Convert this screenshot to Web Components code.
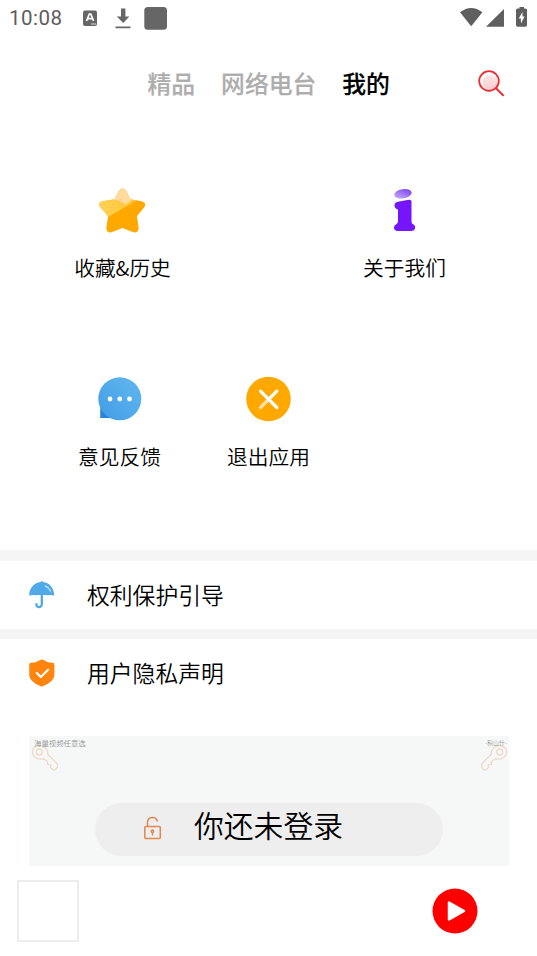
<!DOCTYPE html>
<html lang="zh-CN">
<head>
<meta charset="utf-8">
<title>我的</title>
<style>
html,body{margin:0;background:#fff}
body{width:537px;height:956px;overflow:hidden;font-family:"Noto Sans CJK SC",sans-serif;font-weight:350;color:#000}
</style>
</head>
<body>
<my-page></my-page>
<script>
const define = (name, markup) => {
  const t = document.createElement('template');
  t.innerHTML = markup;
  customElements.define(name, class extends HTMLElement {
    constructor() {
      super();
      this.attachShadow({ mode: 'open' }).append(t.content.cloneNode(true));
    }
  });
};

define('status-bar', `
<style>
:host{display:flex;align-items:center;height:37px;padding:0 9px 0 9px;box-sizing:border-box;color:#666}
span{font:400 20.5px/37px Roboto,sans-serif;width:73px;letter-spacing:.5px;color:#5c5c5c}
svg{display:block}
</style>
<span>10:08</span>
<svg width="90" height="37" viewBox="82 0 90 37">
<rect x="83" y="10.500" width="14" height="15.500" rx="2" fill="#666"/>
<path d="M86.500 21 89.300 14h1.500l2.800 7M87.800 18.700h4.500" fill="none" stroke="#fff" stroke-width="1.700"/><path d="M91 24h5" stroke="#ddd" stroke-width="1"/>
<path d="M121 8.500h4.400v8h4L123.200 23l-6.400-6.500h4.200zM115.500 26.400h15v1.800h-15z" fill="#666"/>
<rect x="144.300" y="7" width="22.700" height="22.700" rx="3.500" fill="#666"/>
</svg>
<svg style="margin-left:auto;flex:none" width="70" height="37" viewBox="458 0 70 37" fill="#5f5f5f">
<path d="M460 12.300Q471.200 3.700 482.400 12.300L471.200 26.300z"/>
<path d="M504 9v17.700h-18z"/>
<path d="M519.500 7h4.500v1.600h1.500q1.500 0 1.500 1.500v15q0 1.600-1.500 1.600h-8q-1.500 0-1.500-1.600v-15q0-1.500 1.500-1.500h2z"/>
<path d="M522.500 12 518.700 18.500h2.200v5l3.700-7h-2.100z" fill="#fff"/>
</svg>`);

define('nav-tab', `
<style>
:host{display:block;font-size:23.800px;line-height:36px;font-weight:500;color:#adadad;white-space:nowrap;-webkit-text-stroke:.15px}
:host([active]){color:#000}
</style><slot></slot>`);

define('tab-bar', `
<style>
:host{display:flex;align-items:center;height:92px;padding-left:147.500px;box-sizing:border-box;gap:26px}
svg{margin-left:auto;margin-right:31px;flex:none}
</style>
<slot></slot>
<svg width="30" height="30" viewBox="476 68 30 30">
<defs><linearGradient id="g" x1="0" y1="0" x2="0" y2="1"><stop offset="0" stop-color="#fde6e8"/><stop offset="1" stop-color="#fcccd0"/></linearGradient></defs>
<circle cx="490" cy="82.500" r="7.500" fill="url(#g)"/>
<circle cx="489" cy="81" r="9.800" fill="none" stroke="#ec2d32" stroke-width="1.800"/>
<path d="M496 88.300 503 95.300" stroke="#ec2d32" stroke-width="2" stroke-linecap="round"/>
</svg>`);

define('menu-tile', `
<style>
:host{display:flex;flex-direction:column;align-items:center;width:149px;font-size:20.700px;line-height:32px;white-space:nowrap}
::slotted(svg){display:block;width:50px;height:50px;margin-bottom:16px}
</style>
<slot name="icon"></slot><slot></slot>`);

define('list-row', `
<style>
:host{display:flex;align-items:center;height:68px;border-top:11px solid #f5f5f5;padding-left:25px;font-size:22.800px;line-height:36px}
::slotted(svg){display:block;width:32px;height:32px;margin-right:30px}
</style>
<slot name="icon"></slot><slot></slot>`);

define('login-banner', `
<style>
:host{display:grid;position:relative;margin:30px 28px 0 29px;height:130px;background:#f6f8f8;box-sizing:border-box;padding:66.500px 66px 10.500px}
.pill{display:flex;align-items:center;background:#eee;border-radius:27px;padding-left:46px;font-size:29.800px;line-height:44px}
.pill span{margin:-10px 0 0 30px}
.tiny{position:absolute;top:1px;font-size:7.400px;line-height:12px;color:#969898;white-space:nowrap}
.l{left:5px}.r{right:2px;font-size:6px}
.key{position:absolute;top:6px;fill:none;stroke:#efd9c8;stroke-width:1.300}
</style>
<svg class="key" style="left:1px" width="32" height="30" viewBox="30 742 32 30"><path d="M39.500 745.500c5 0 8.500 4 8.300 9l9.300 9c1 3-.5 6.500-3.600 6.700l-3-2.800.2-2.700-3-.4-.3-3-3.600-2.500c-6 1.600-11.300-2-11.300-6.800 0-3.800 3-6.500 7-6.500z"/><circle cx="39.300" cy="752" r="3"/></svg>
<svg class="key" style="right:0" width="32" height="30" viewBox="30 742 32 30"><path transform="matrix(-1 0 0 1 92 0)" d="M39.500 745.500c5 0 8.500 4 8.300 9l9.300 9c1 3-.5 6.500-3.600 6.700l-3-2.800.2-2.700-3-.4-.3-3-3.600-2.500c-6 1.600-11.300-2-11.300-6.800 0-3.800 3-6.500 7-6.500z"/><circle cx="52.700" cy="752" r="3"/></svg>
<div class="tiny l">海量视频任意选</div><div class="tiny r">-积山什-</div>
<div class="pill">
<svg width="23" height="26" viewBox="141 815.500 23 26" fill="none" stroke="#df8850" stroke-width="1.500"><rect x="144.800" y="826" width="15.500" height="12" rx="1"/><path d="M147.500 826v-4.200a5 5 0 0 1 9.900-.8"/><circle cx="152.500" cy="830.800" r="1.200"/><path d="M152.500 832v3"/></svg>
<span><slot></slot></span></div>`);

define('player-bar', `
<style>
:host{display:flex;align-items:center;justify-content:space-between;height:90px;padding:0 59px 0 17px}
.cover{width:58px;height:58px;border:2px solid #ededed}
</style>
<div class="cover"></div>
<svg width="46" height="46" viewBox="432 888 46 46"><circle cx="455" cy="911" r="22.500" fill="red"/><path d="M449 902.500 464 911 449 919.500z" fill="#fff" stroke="#fff" stroke-width="2.500" stroke-linejoin="round"/></svg>`);

define('my-page', `
<style>
:host{display:block;width:537px;height:956px;background:#fff}
.tiles{display:flex;height:189px;padding-left:45px;box-sizing:border-box}
.first{padding:56px 0 0 48px;gap:133px;height:245px}
.second{height:176px}
</style>
<status-bar></status-bar>
<tab-bar><nav-tab>精品</nav-tab><nav-tab>网络电台</nav-tab><nav-tab active>我的</nav-tab></tab-bar>
<div class="tiles first">
<menu-tile>
<svg slot="icon" viewBox="97.500 185 50 50"><defs><clipPath id="s"><path d="M118.200 191q3.800-5 7.600 0l3.800 8.200 11.500 2q5.600 1.800 2.500 6.300l-7.200 8.700 1.700 10.800q.2 6.200-5.100 5.300l-11-4.300-11 4.300q-5.300.9-5.100-5.300l1.700-10.800-8-9.200q-2.800-4.400 2.500-5.800l12-2z"/></clipPath><linearGradient id="y" x1="0" x2="1"><stop stop-color="#ffd25a"/><stop offset="1" stop-color="#ffc229"/></linearGradient></defs><g clip-path="url(#s)"><path fill="#ffa800" d="M97 186h50v50H97z"/><path fill="url(#y)" d="M97 186h47v10L107.500 217H97z"/><path fill="#ffdba0" d="M110 186h24v12l-9 6.500q-5-4.500-12-4.500z"/></g></svg>收藏&amp;历史</menu-tile>
<menu-tile>
<svg slot="icon" viewBox="380 185 50 50"><defs><linearGradient id="v" x1="0" y1=".8" x2="1" y2="0"><stop stop-color="#c7acf8"/><stop offset="1" stop-color="#7034ee"/></linearGradient></defs><ellipse cx="403" cy="193.800" rx="8.800" ry="4.600" transform="rotate(-9 403 193.800)" fill="url(#v)"/><path fill="#7415fb" d="M394.500 205q0-2.500 4.500-3.400l8.500-1.600q4-1 4 1.500v20q0 2.300 2 3 2 .8 1.600 3.300-.5 3.200-4.100 3.200h-13q-3.700 0-4-3.200-.2-2.300 2-3.200 2-.8 2-3.500v-11.500q-3.500-1-3.500-4.600z"/></svg>关于我们</menu-tile>
</div>
<div class="tiles second">
<menu-tile>
<svg slot="icon" viewBox="95 374 50 50"><defs><linearGradient id="b" x1="1" y1="0" x2="0" y2="1"><stop stop-color="#62b8ee"/><stop offset="1" stop-color="#419ce6"/></linearGradient></defs><path d="M100.500 406v12h13z" fill="#2386d6"/><path d="M100.500 408v10h10" fill="#2386d6"/><circle cx="119.800" cy="398.800" r="21.500" fill="url(#b)"/><g fill="#fff"><circle cx="110" cy="399" r="2.400"/><circle cx="119.800" cy="399" r="2.400"/><circle cx="129.500" cy="399" r="2.400"/></g></svg>意见反馈</menu-tile>
<menu-tile>
<svg slot="icon" viewBox="244 374 50 50"><circle cx="268.500" cy="399" r="22.300" fill="#ffa800"/><g stroke-width="3.300" stroke-linecap="round"><path d="M260.500 407.500 268.500 399.500" stroke="#ffe0a5"/><path d="M268.500 399.500 276.800 391.200M260.500 391.200 276.800 407.500" stroke="#fff"/></g></svg>退出应用</menu-tile>
</div>
<list-row><svg slot="icon" viewBox="25 579 32 32"><path fill="#50aae8" d="M40.700 582q1.200-2.200 2.300 0c6.500.7 11 6 11.300 13.500-3-.7-5-.7-6.500-.2-1.500-.4-9.500-.4-12 0-1.500-.5-4-.5-6.700.2.300-7.500 5.100-12.800 11.600-13.500z"/><path d="M41.800 593v11.500a2.700 2.700 0 0 1-5.400-.3" fill="none" stroke="#50aae8" stroke-width="2.300" stroke-linecap="round"/><path d="M45.500 586q3.500 1.500 5 5" fill="none" stroke="#b9ddf7" stroke-width="1.400" stroke-linecap="round"/></svg>权利保护引导</list-row>
<list-row style="height:68px;border-top-width:10px"><svg slot="icon" viewBox="25 657 32 32"><path fill="#ff850f" d="M39.600 660.200q2.200-1.500 4.400 0 3.800 2.500 8.600 2.600 1.800.2 1.800 2v9.500c0 6.500-6 9.500-12.600 12.500-6.600-3-12.600-6-12.600-12.500v-9.500q0-1.800 1.800-2 4.800-.1 8.600-2.600z"/><path d="m36.800 673 4 4 7.300-7.200" fill="none" stroke="#fff" stroke-width="2.200" stroke-linecap="round" stroke-linejoin="round"/></svg>用户隐私声明</list-row>
<login-banner style="margin-top:29px"><span>你还未登录</span></login-banner>
<player-bar></player-bar>`);
</script>
</body>
</html>
